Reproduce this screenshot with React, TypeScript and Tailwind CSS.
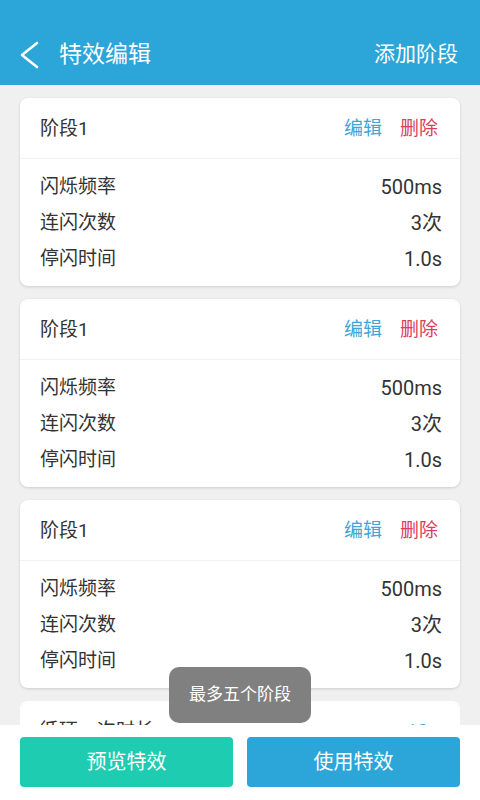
const stages = [
  { name: "阶段1", rate: "500ms", count: "3次", pause: "1.0s" },
  { name: "阶段1", rate: "500ms", count: "3次", pause: "1.0s" },
  { name: "阶段1", rate: "500ms", count: "3次", pause: "1.0s" },
];

const font = { fontFamily: 'Roboto, "Noto Sans CJK SC", "Noto Sans", sans-serif' };

const StageCard = ({ stage }: { stage: (typeof stages)[number] }) => {
  const rows = [
    ["闪烁频率", stage.rate],
    ["连闪次数", stage.count],
    ["停闪时间", stage.pause],
  ];
  return (
    <div className="bg-white rounded-lg shadow-[0_1px_3px_rgba(0,0,0,0.15)] shrink-0">
      <div className="h-[61px] pt-[2px] flex items-center justify-between pl-5 pr-[22px] border-b border-[#f3f3f3]">
        <p className="text-[19px] text-[#333]">{stage.name}</p>
        <div className="flex gap-[18px] text-[19px]">
          <span className="text-[#3fa6d5]">编辑</span>
          <span className="text-[#d9405c]">删除</span>
        </div>
      </div>
      <div className="pt-[10px] pb-[9px] pl-5 pr-[18px]">
        {rows.map(([label, value]) => (
          <div key={label} className="h-9 flex items-center justify-between text-[19px] text-[#333]">
            <span>{label}</span>
            <span className="text-[20px]">{value}</span>
          </div>
        ))}
      </div>
    </div>
  );
};

const App = () => {
  return (
    <div className="relative w-[480px] h-[800px] flex flex-col bg-[#f0f0f0] overflow-hidden" style={font}>
      <div className="h-[85px] shrink-0 bg-[#2ca6d8] pt-[25px] flex items-center justify-between pl-[20px] pr-[22px] text-white">
        <div className="flex items-center">
          <svg width="20" height="28" viewBox="0 0 20 28" fill="none" className="mr-[19px]">
            <polyline points="17,2 2,14 17,26" stroke="white" strokeWidth="2.6" strokeLinecap="round" strokeLinejoin="round" />
          </svg>
          <span className="text-[23px]">特效编辑</span>
        </div>
        <span className="text-[21px]">添加阶段</span>
      </div>

      <div className="flex-1 overflow-hidden px-5 pt-[13px] flex flex-col gap-[13px]">
        {stages.map((s, i) => (
          <StageCard key={i} stage={s} />
        ))}
        <div className="bg-white rounded-lg h-[61px] shrink-0 flex items-center justify-between pl-5 pr-[22px] text-[19px]">
          <span className="text-[#333]">循环一次时长</span>
          <span className="text-[#3fa6d5]">10s</span>
        </div>
      </div>

      <div className="h-[75px] shrink-0 bg-white flex gap-[14px] px-5 pt-3">
        <button className="flex-1 h-[50px] rounded bg-[#1ecdb1] text-white text-[20px]">预览特效</button>
        <button className="flex-1 h-[50px] rounded bg-[#2ca6d8] text-white text-[20px]">使用特效</button>
      </div>

      <div className="absolute left-[169px] top-[667px] w-[142px] h-[56px] rounded-[10px] bg-[#808080] flex items-center justify-center text-white text-[17px]">
        最多五个阶段
      </div>
    </div>
  );
};

export default App;
